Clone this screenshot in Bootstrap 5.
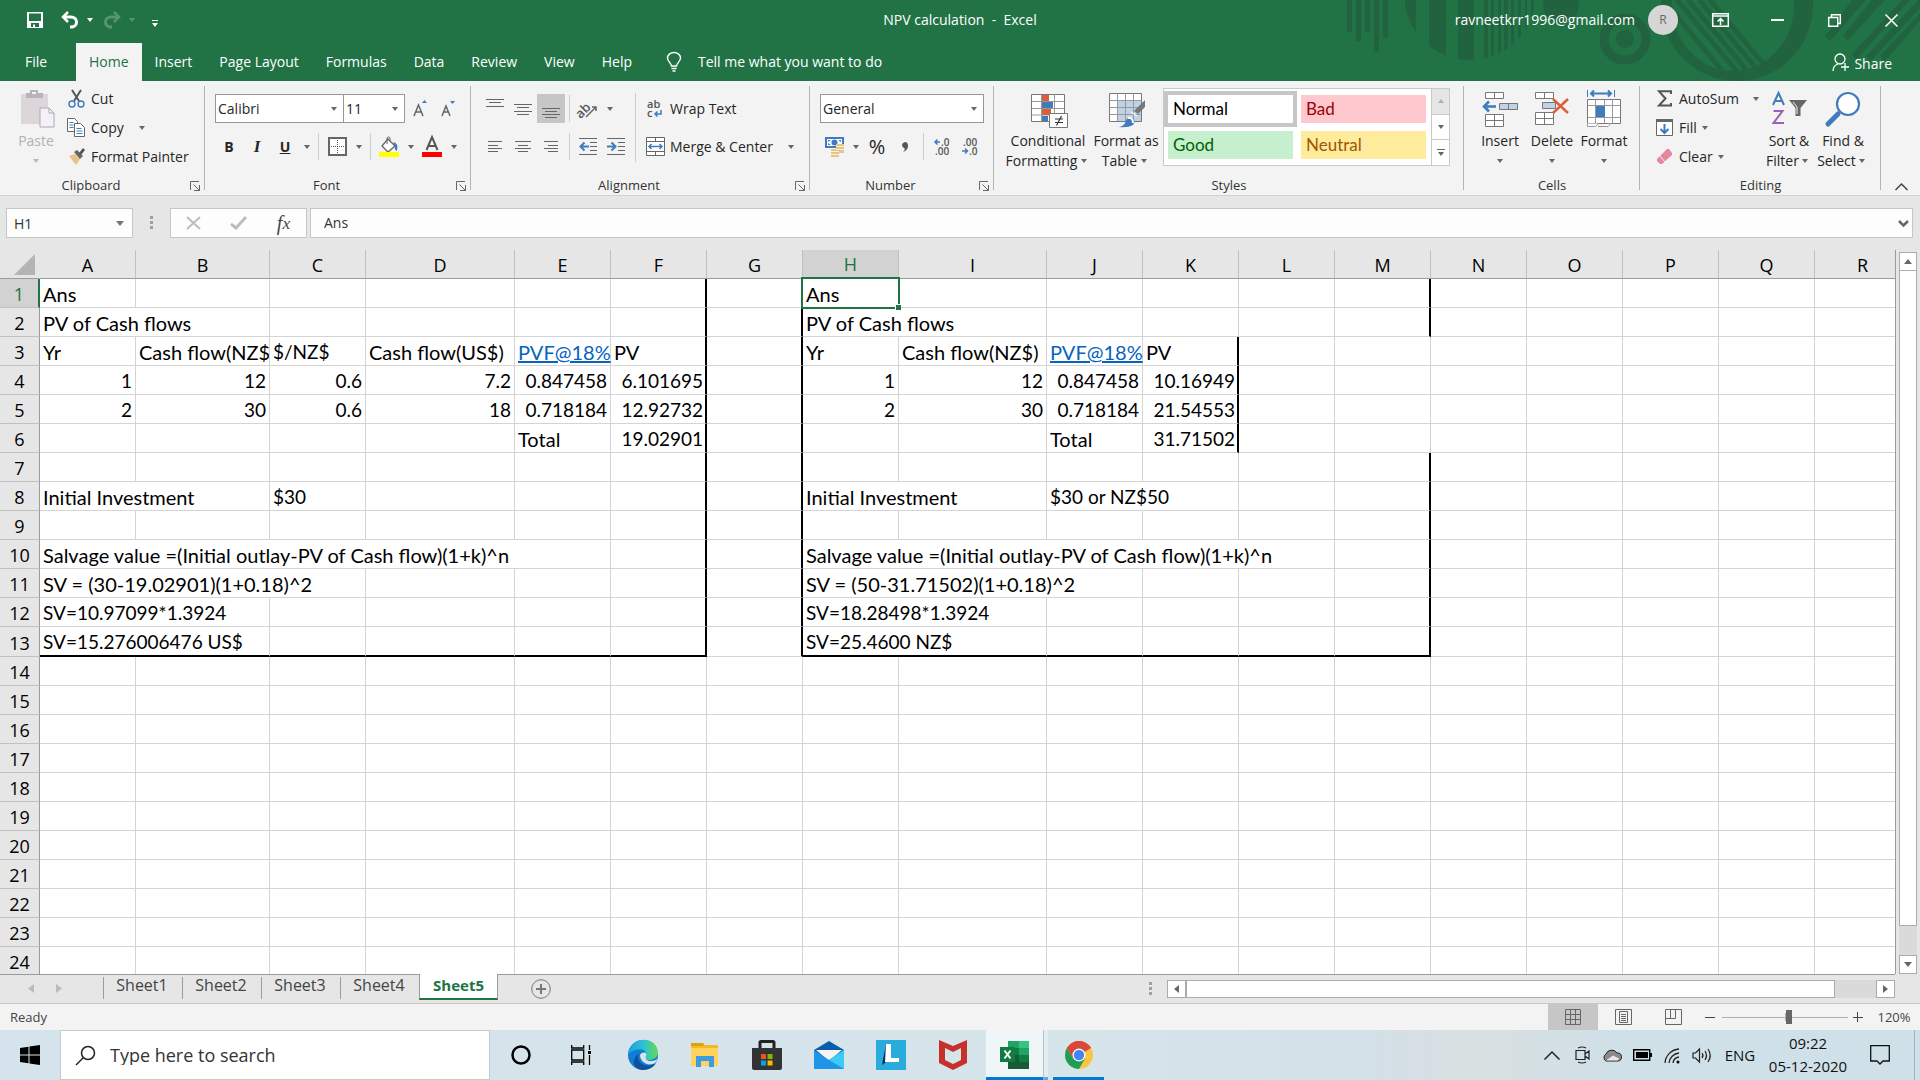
<!DOCTYPE html>
<html lang="en">
<head>
<meta charset="utf-8">
<meta name="viewport" content="width=device-width, initial-scale=1">
<title>NPV calculation - Excel</title>
<link rel="stylesheet" href="https://cdn.jsdelivr.net/npm/bootstrap@5.3.0/dist/css/bootstrap.min.css">
<style>
  body { font-family: "Open Sans", "Noto Sans", sans-serif; font-size: 14px; line-height: 20px; color: #262626; background: #e6e6e6; }
  button { font: inherit; color: inherit; background: none; border: 0; padding: 0; }
  svg { display: block; flex: none; overflow: visible; }
  .app-top { background: #217346; color: #fff; position: relative; }
  .app-top > .deco { position: absolute; right: 0; top: 0; overflow: hidden; }
  .title-row { height: 43px; padding-top: 3px; font-size: 14px; position: relative; }
  .title-row > div { flex: 1 1 0; height: 34px; }
  .quick button { margin-left: 10px; }
  .quick button:first-child { margin-left: 27px; }
  .quick button:nth-of-type(2) { margin-left: 18px; }
  .quick button:last-child { margin-left: 16px; }
  .win-btn { width: 57px; height: 34px; display: flex; align-items: center; justify-content: center; }
  .avatar-dot { width: 30px; height: 30px; margin: 0 14px 0 13px; border-radius: 50%; background: #d6d6d6; color: #666; font-size: 12px; line-height: 30px; text-align: center; }
  .tab-row { height: 38px; position: relative; }
  .tab-row .nav-link { color: #fff; padding: 9px 14px 9px 13px; line-height: 20px; border-radius: 0; }
  .tab-row .nav-link.active { color: #217346; background: #f3f3f3; padding: 9px 13px; }
  .tab-row .file-link { width: 76px; padding-left: 25px; }
  .ribbon { background: #f3f3f3; height: 115px; border-bottom: 1px solid #d2d2d2; padding-top: 3px; }
  .rgroup { display: flex; flex-direction: column; position: relative; height: 111px; flex: none; }
  .rgroup::after { content: ""; position: absolute; right: 0; top: 2px; bottom: 5px; width: 1px; background: #b5b5b5; }
  .rbody { height: 90px; display: flex; padding-left: 10px; }
  .rlabel { text-align: center; font-size: 13px; line-height: 23px; height: 21px; color: #333; position: relative; }
  .rlabel.launch { padding-right: 23px; }
  .rlabel svg { position: absolute; right: 5px; top: 7px; }
  .g-clip { width: 205px; } .g-font { width: 266px; } .g-align { width: 339px; } .g-num { width: 184px; }
  .g-styles { width: 470px; } .g-cells { width: 176px; } .g-edit { width: 241px; }
  .g-styles .rbody { padding-left: 13px; }
  .tool { width: 28px; height: 29px; display: inline-flex; align-items: center; justify-content: center; flex: none; }
  .tool.on { background: #c6c6c6; }
  .tool-text { height: 29px; display: flex; align-items: center; gap: 1px; white-space: nowrap; }
  .serif { font-family: "Liberation Serif", serif; font-size: 17px; }
  .car { width: 15px; display: flex; justify-content: center; align-items: center; flex: none; }
  .car::before { content: ""; border: 3px solid transparent; border-top: 4px solid #666; border-bottom: 0; }
  .car.far { margin-left: 10px; }
  .pale { color: #b1b1b1; }
  .pale .car::before { border-top-color: #b9b9b9; }
  .vsep { width: 1px; margin: 0 4px; height: 27px; background: #cfcfcf; flex: none; }
  .vsep.tall { height: 69px; margin: 9px 5px 0 5px; }
  .trow { display: flex; align-items: center; height: 29px; }
  .two-rows { padding-top: 10px; display: flex; flex-direction: column; gap: 9px; }
  .bigbtn { display: flex; flex-direction: column; align-items: center; padding-top: 4px; line-height: 20px; flex: none; white-space: nowrap; }
  .bigbtn .pic { height: 43px; display: flex; align-items: flex-start; justify-content: center; }
  .bigbtn .car { height: 20px; }
  .bigbtn .line2 { display: flex; }
  .bigbtn .line2 .car { width: 13px; }
  .w82 { width: 82px; } .w74 { width: 74px; } .w54 { width: 54px; } .w52 { width: 52px; } .w112 { width: 112px; }
  .combo { appearance: none; height: 29px; border: 1px solid #979797; border-radius: 0; background: #fff url("data:image/svg+xml,%3Csvg xmlns='http://www.w3.org/2000/svg' width='6' height='4'%3E%3Cpath d='M0 0h6L3 4z' fill='%23666'/%3E%3C/svg%3E") no-repeat right 6px center; padding: 0 2px; font-size: 14px; color: #262626; }
  .combo.face { width: 129px; } .combo.points { width: 62px; margin: 0 2px 0 -1px; } .combo.fmt { width: 164px; }
  .gallery { width: 287px; height: 78px; margin-top: 4px; background: #fff; border: 1px solid #c9c9c9; display: flex; }
  .swatches { display: grid; grid-template-columns: 133px 133px; grid-template-rows: 36px 36px; padding-top: 2px; flex: 1; }
  .swatch { margin: 4px; padding-left: 5px; text-align: left; font-family: Lato, sans-serif; font-size: 17px; line-height: 26px; }
  .swatch.norm { margin: 0; border: 4px solid #c6c6c6; color: #000; }
  .swatch.bad { background: #ffc7ce; color: #9c0006; } .swatch.good { background: #c6efce; color: #006100; } .swatch.neu { background: #ffeb9c; color: #9c5700; }
  .gscroll { width: 18px; border-left: 1px solid #c9c9c9; display: flex; flex-direction: column; }
  .gscroll button { flex: 1; display: flex; align-items: center; justify-content: center; }
  .gscroll button + button { border-top: 1px solid #c9c9c9; }
  .gscroll button:first-child { background: #e6e6e6; }
  .fbar { padding: 12px 7px 12px 6px; height: 54px; display: flex; }
  .fbox { height: 30px; border: 1px solid #c6c6c6; background: #fdfdfd; color: #333; font-size: 14px; border-radius: 0; }
  .fbox.addr { width: 127px; padding: 0 7px; background: #fdfdfd url("data:image/svg+xml,%3Csvg xmlns='http://www.w3.org/2000/svg' width='8' height='5'%3E%3Cpath d='M0 0h8L4 5z' fill='%23777'/%3E%3C/svg%3E") no-repeat right 8px center; }
  .fbox.funcs { width: 137px; } .fbox.funcs button { flex: 1; display: flex; align-items: center; justify-content: center; }
  .fxbtn { font-family: "Liberation Serif", serif; font-style: italic; font-size: 20px; color: #444; }
  .dots3 { width: 37px; display: flex; align-items: center; justify-content: center; }
  .formula { flex: 1; margin-left: 3px; padding-right: 3px; display: flex; align-items: center; }
  .formula input { flex: 1; border: 0; background: transparent; padding: 0 13px; font-size: 14px; color: #333; outline: 0; min-width: 0; }
  .sheet-area { display: flex; flex: 1; min-height: 0; }
  .grid-wrap { flex: 1; min-width: 0; overflow: hidden; border-right: 1px solid #9b9b9b; }
  .cells { table-layout: fixed; width: 0; border-collapse: separate; border-spacing: 0; background: #fff; color: #000; font-family: Lato, sans-serif; font-size: 20px; }
  .cells th { font-family: "Open Sans", sans-serif; font-size: 18px; font-weight: 400; text-align: center; background: #e6e6e6; padding: 2px 0 0; line-height: 26px; overflow: hidden; }
  .cells thead th { height: 29px; border-bottom: 1px solid #9b9b9b; border-right: 1px solid #c0c0c0; }
  .cells thead th:first-child { border-right-color: #e6e6e6; padding: 0; }
  .cells thead th.cur { background: #d2d2d2; color: #217346; border-bottom: 2px solid #217346; line-height: 25px; }
  .cells tbody th { border-right: 1px solid #9b9b9b; border-bottom: 1px solid #c0c0c0; height: 29px; }
  .cells tbody th.cur { background: #d2d2d2; color: #217346; border-right: 2px solid #217346; }
  .cells td { padding: 2px 3px 0 3px; line-height: 26px; height: 29px; border-right: 1px solid #d4d4d4; border-bottom: 1px solid #d4d4d4; white-space: nowrap; position: relative; }
  .cells .closing > * { height: 30px; }
  .cells td.fig { font-size: 19px; }
  .cells td.n { text-align: right; }
  .cells td.clip { overflow: hidden; }
  .cells td.rb { border-right: 2px solid #000; } .cells td.rb.n { padding-right: 2px; } .cells td.bb { border-bottom: 2px solid #000; }
  .cells a { color: #0563c1; }
  .picked { position: absolute; inset: -2px; border: 2px solid #217346; pointer-events: none; z-index: 2; }
  .picked::after { content: ""; position: absolute; right: -3px; bottom: -3px; width: 5px; height: 5px; background: #217346; border: solid #fff; border-width: 1px 0 0 1px; box-sizing: content-box; }
  .corner { margin-left: auto; margin-right: 4px; }
  .vscroll { width: 24px; padding: 2px 3px 0 3px; display: flex; flex-direction: column; }
  .sbtn { width: 18px; height: 19px; background: #fff; border: 1px solid #ababab; display: flex; align-items: center; justify-content: center; flex: none; }
  .strack { background: #dadada; flex: 1; display: flex; }
  .vscroll .strack { flex-direction: column; }
  .sthumb { background: #fff; border: 1px solid #ababab; }
  .vscroll .sthumb { flex: 656; border-top: 0; } .vscroll .srest { flex: 29; }
  .tabbar { height: 30px; border-bottom: 1px solid #c6c6c6; display: flex; align-items: flex-start; padding-right: 25px; background: linear-gradient(#9b9b9b, #9b9b9b) left top / calc(100% - 25px) 1px no-repeat; }
  .tabnavs { width: 103px; height: 29px; display: flex; align-items: center; padding-left: 28px; gap: 22px; }
  .stab { width: 79px; height: 22px; margin-top: 3px; border-left: 1px solid #9b9b9b; text-align: center; font-size: 16px; line-height: 16px; color: #444; display: block; text-decoration: none; padding-right: 2px; }
  .stab.cur { margin-top: 0; height: 26px; background: #fff; border-right: 1px solid #9b9b9b; border-bottom: 2px solid #217346; color: #217346; font-weight: 700; line-height: 22px; font-size: 15px; padding: 0; }
  .addtab { margin: 5px 0 0 33px; }
  .hscroll { margin: 6px 0 0 auto; display: flex; height: 18px; width: 728px; }
  .hscroll .sbtn { height: 18px; width: 19px; }
  .hscroll .sthumb { flex: 649; } .hscroll .srest { flex: 41; }
  .dots-h { margin: 8px 0 0 auto; } .dots-h + .hscroll { margin-left: 15px; }
  .status { height: 26px; background: #f3f3f3; display: flex; align-items: center; padding-left: 10px; font-size: 13px; color: #444; }
  .vbtn { width: 50px; height: 26px; display: flex; align-items: center; justify-content: center; } .vbtn.on { background: #c6c6c6; }
  .zoombar { appearance: none; width: 126px; height: 14px; background: linear-gradient(#b0b0b0, #b0b0b0) center / 100% 1px no-repeat, linear-gradient(#b0b0b0, #b0b0b0) center / 1px 8px no-repeat; margin: 0; }
  .zoombar::-webkit-slider-thumb { appearance: none; width: 6px; height: 14px; background: #666; border: 0; }
  .zbtn { width: 24px; display: flex; justify-content: center; }
  .zbtn.plus { width: 20px; }
  .zpct { width: 52px; }
  .taskbar { height: 50px; display: flex; color: #111; background: linear-gradient(90deg, #d4e3ec 0, #d6e5ea 55%, #d4e2ea 64%, #d3e0e8 71%, #d8dfe0 77%, #d0e0e8 84%, #cfe0e8 100%); }
  .startbtn { width: 60px; display: flex; align-items: center; justify-content: center; }
  .findbox { width: 430px; background: #fff; border: 1px solid #c4cbd0; display: flex; align-items: center; padding-left: 14px; gap: 14px; }
  .findbox input { border: 0; outline: 0; font-size: 18px; flex: 1; min-width: 0; padding: 0; background: transparent; color: #222; }
  .findbox input::placeholder { color: #333; opacity: 1; }
  .tico { width: 62px; display: flex; align-items: center; justify-content: center; }
  .tico.wide { width: 61px; }
  .tico.live { width: 57px; margin-left: 2px; background: #f0f5f7; border-bottom: 3px solid #0078d7; padding-top: 3px; }
  .livemore { width: 5px; background: #e3edf1; border-left: 1px solid #b4c1c7; border-bottom: 3px solid #5ea8e2; }
  .tico.run { width: 51px; margin-left: 5px; border-bottom: 3px solid #0078d7; padding-top: 3px; }
  .tray { margin-left: auto; display: flex; align-items: center; }
  .tray button { width: 30px; display: flex; justify-content: center; }
  .tray .lang { width: 46px; font-size: 15px; }
  .tray .note { width: 20px; }
  .clock { width: 80px; text-align: center; font-size: 15px; line-height: 23px; margin: 0 22px 0 5px; }
  .desk { width: 6px; align-self: stretch; border-left: 1px solid #a5b4bc; margin-left: 24px; }
</style>
</head>
<body class="d-flex flex-column vh-100 overflow-hidden">

<header class="app-top">
  <svg class="deco" width="580" height="81" viewBox="1340 0 580 81" fill="#22633f">
    <defs><clipPath id="bars"><path d="M1405 0h11v81h-11zM1429 0h17v81h-17zM1458 0h16v81h-16zM1484 0h4v81h-4zM1491 0h3v81h-3zM1498 0h3v81h-3zM1504 0h4v81h-4zM1511 0h3v81h-3zM1518 0h3v81h-3zM1525 0h2v81h-2zM1531 0h3v81h-3z"/></clipPath>
    <clipPath id="disc"><circle cx="1735" cy="5" r="66"/></clipPath></defs>
    <path d="M1347 0h5v32h-5zM1356 0h5v41h-5zM1365 0h5v32h-5zM1374 0h5v52h-5zM1383 0h5v38h-5z"/>
    <circle cx="1470" cy="-6" r="66" clip-path="url(#bars)"/>
    <circle cx="1561" cy="5" r="18"/>
    <circle cx="1625" cy="39" r="21" fill="none" stroke="#22633f" stroke-width="9"/><circle cx="1625" cy="39" r="9"/>
    <path fill-rule="evenodd" d="M1813 5a76 76 0 1 1-152 0a76 76 0 1 1 152 0M1794 5a61 66 0 1 0-122 0a61 66 0 1 0 122 0"/>
    <g stroke="#22633f" stroke-width="5" clip-path="url(#disc)"><path d="M1663 0l72 86M1677 0l72 86M1688 0l72 86M1699 0l72 86M1710 0l72 86"/></g>
    <path d="M1825 36l27-36h14l-36 41zM1843 35l29-35h13l-38 41zM1852 54l50-54h8l-54 60zM1866 56l54-58v10l-50 54zM1880 56l40-43v8l-36 41z"/>
  </svg>
  <div class="title-row d-flex align-items-start">
    <div class="quick d-flex align-items-center">
      <button aria-label="Save"><svg width="16" height="16" viewBox="0 0 16 16"><path d="M0 0h16v16H0zM2 1.500V9h12V1.500zM4 11v4h2v-2.500h2V15h4v-4z" fill="#fff" fill-rule="evenodd"/></svg></button>
      <button aria-label="Undo"><svg width="18" height="16" viewBox="0 0 18 16" fill="none" stroke="#fff" stroke-width="3"><path d="M3 5h7a5 4.500 0 0 1 0 10H9"/><path d="M7 0L2 5l5 5" stroke-width="2.500"/></svg></button>
      <span class="ms-2"><svg width="6" height="4"><path d="M0 0h6L3 4z" fill="#fff"/></svg></span>
      <button aria-label="Redo"><svg width="18" height="16" viewBox="0 0 18 16" fill="none" stroke="#569473" stroke-width="3"><path d="M15 5H8a5 4.500 0 0 0 0 10h1"/><path d="M11 0l5 5-5 5" stroke-width="2.500"/></svg></button>
      <span class="ms-2"><svg width="6" height="4"><path d="M0 0h6L3 4z" fill="#569473"/></svg></span>
      <button aria-label="Customize Quick Access Toolbar" class="pt-2"><svg width="8" height="8"><path d="M1 0h6v1H1zM1 3h6L4 7z" fill="#fff"/></svg></button>
    </div>
    <div class="d-flex align-items-center justify-content-center">NPV calculation&nbsp; -&nbsp; Excel</div>
    <div class="d-flex align-items-center justify-content-end">
      <span>ravneetkrr1996@gmail.com</span>
      <span class="avatar-dot">R</span>
      <button class="win-btn" aria-label="Ribbon Display Options"><svg width="17" height="14" viewBox="0 0 17 14" fill="none" stroke="#fff" stroke-width="1.500"><path d="M.7.7h15.600v12.600H.7zM1 3h15M8.500 12V6M5.500 8.500l3-3 3 3"/></svg></button>
      <button class="win-btn" aria-label="Minimize"><svg width="13" height="2"><path d="M0 0h13v2H0z" fill="#fff"/></svg></button>
      <button class="win-btn" aria-label="Restore"><svg width="13" height="13" viewBox="0 0 13 13" fill="none" stroke="#fff" stroke-width="1.500"><path d="M.7 3.500h9v8.800h-9zM3.500 3.500V.7h8.800v8.800H10"/></svg></button>
      <button class="win-btn" aria-label="Close"><svg width="13" height="13" viewBox="0 0 13 13" stroke="#fff" stroke-width="1.500"><path d="M.5.5l12 12M12.500.5l-12 12"/></svg></button>
    </div>
  </div>
  <nav class="tab-row d-flex">
    <div class="nav flex-nowrap">
      <a class="nav-link file-link" href="#">File</a><a class="nav-link active" href="#">Home</a><a class="nav-link" href="#">Insert</a><a class="nav-link" href="#">Page Layout</a><a class="nav-link" href="#">Formulas</a><a class="nav-link" href="#">Data</a><a class="nav-link" href="#">Review</a><a class="nav-link" href="#">View</a><a class="nav-link" href="#">Help</a>
    </div>
    <button class="d-flex align-items-center ms-3 ps-1"><svg width="16" height="20" viewBox="0 0 16 20" fill="none" stroke="#fff" stroke-width="1.400"><path d="M5.500 14c0-3-4-4-4-8a6.500 5.500 0 0 1 13 0c0 4-4 5-4 8zM5.500 16.500h5M6.500 19h3"/></svg><span class="ms-3">Tell me what you want to do</span></button>
    <button class="d-flex align-items-center ms-auto pe-4 me-1"><svg width="18" height="19" viewBox="0 0 18 19" fill="none" stroke="#fff" stroke-width="1.300"><circle cx="8" cy="6" r="5"/><path d="M1 18c0-4 2-6 5-7M13 10v8M9 14h8"/></svg><span class="ms-1 pt-1">Share</span></button>
  </nav>
</header>

<section class="ribbon d-flex" aria-label="Home ribbon">
  <div class="rgroup g-clip">
    <div class="rbody">
      <button class="bigbtn w52 pale"><span class="pic"><svg width="36" height="40" viewBox="0 0 36 40"><path d="M3 6h27v30H3z" fill="#dcd6da"/><path d="M8 5h4V2h8v3h5v5H8z" fill="#b5b5b5"/><path d="M14 4h4v2h-4z" fill="#f3f3f3"/><path d="M22 20h9l5 5v14H22z" fill="#f5f0f7" stroke="#aaa"/><path d="M31 20v5h5" fill="none" stroke="#aaa"/></svg></span>Paste<span class="car"></span></button>
      <div>
        <button class="tool-text"><span class="tool"><svg width="17" height="19" viewBox="0 0 17 19" fill="none"><path d="M4 1l7 11M13 1L6 12" stroke="#555" stroke-width="2"/><circle cx="4" cy="15" r="3" stroke="#3f7bbd" stroke-width="1.400"/><circle cx="13" cy="15" r="3" stroke="#3f7bbd" stroke-width="1.400"/></svg></span>Cut</button>
        <button class="tool-text"><span class="tool"><svg width="18" height="19" viewBox="0 0 18 19" fill="#fff" stroke="#666"><path d="M.5.5h7l3 3v10H.5z"/><path d="M7.500 5.500h6l4 4v9h-10z"/><path d="M2.500 4.500h4M2.500 7h4M2.500 9.500h4M9.500 10.500h5M9.500 13h6M9.500 15.500h6" stroke="#3f7bbd"/></svg></span>Copy<span class="car far"></span></button>
        <button class="tool-text"><span class="tool"><svg width="17" height="18" viewBox="0 0 17 18"><path d="M1 8l6-2 5 5-4 6z" fill="#eac282"/><path d="M6 4l3-2 6 6-3 3z" fill="#666"/><path d="M11 5l4-5 2 2-4 5z" fill="#555"/></svg></span>Format Painter</button>
      </div>
    </div>
    <div class="rlabel launch">Clipboard<svg width="10" height="10" fill="none" stroke="#666"><path d="M.5 9V.5H9M3.500 3.500l6 6M9.500 4v5.500H4"/></svg></div>
  </div>

  <div class="rgroup g-font">
    <div class="rbody"><div class="two-rows">
      <div class="trow"><select class="combo face" aria-label="Font"><option>Calibri</option></select><select class="combo points" aria-label="Font Size"><option>11</option></select>
        <button class="tool" aria-label="Increase Font Size"><svg width="16" height="17" viewBox="0 0 16 17"><path d="M1 16L5.500 5L10 16M3 12h5" fill="none" stroke="#666" stroke-width="1.500"/><path d="M9 3h5l-2.500-3z" fill="#3f7bbd"/></svg></button>
        <button class="tool" aria-label="Decrease Font Size"><svg width="16" height="17" viewBox="0 0 16 17"><path d="M1 16L5 6L9 16M3 12h5" fill="none" stroke="#666" stroke-width="1.500"/><path d="M9 1h5l-2.500 3z" fill="#3f7bbd"/></svg></button></div>
      <div class="trow"><button class="tool fw-bold">B</button><button class="tool fst-italic fw-bold serif">I</button><button class="tool fw-bold text-decoration-underline">U</button><span class="car"></span><span class="vsep"></span>
        <button class="tool" aria-label="Borders"><svg width="19" height="19" viewBox="0 0 19 19" fill="#fff"><path d="M1 1h17v17H1z" stroke="#666" stroke-width="2"/><path d="M9.500 3v13M3 9.500h13" stroke="#555" stroke-dasharray="1 1"/></svg></button><span class="car"></span><span class="vsep"></span>
        <button class="tool" aria-label="Fill Color"><svg width="20" height="20" viewBox="0 0 20 20"><path d="M9 2l7 7-7 6-6-6z" fill="#fff" stroke="#666" stroke-width="1.300"/><path d="M8 7V1.500a1.500 1.500 0 0 1 3 0V4" fill="none" stroke="#666"/><path d="M14 5q6 1 4 9q-3-1-2-5z" fill="#3f7bbd"/><path d="M0 15h20v5H0z" fill="#ff0"/></svg></button><span class="car"></span>
        <button class="tool" aria-label="Font Color"><svg width="20" height="20" viewBox="0 0 20 20"><path d="M4.500 13L10 0l5.500 13M6.500 9h7" fill="none" stroke="#555" stroke-width="2"/><path d="M0 15h20v5H0z" fill="red"/></svg></button><span class="car"></span></div>
    </div></div>
    <div class="rlabel launch">Font<svg width="10" height="10" fill="none" stroke="#666"><path d="M.5 9V.5H9M3.500 3.500l6 6M9.500 4v5.500H4"/></svg></div>
  </div>

  <div class="rgroup g-align">
    <div class="rbody">
      <div class="two-rows">
        <div class="trow"><button class="tool" aria-label="Top Align"><svg width="18" height="20" stroke="#666"><path d="M0 .5h18M3 3.500h12M0 7.500h18"/></svg></button><button class="tool" aria-label="Middle Align"><svg width="18" height="14" stroke="#666"><path d="M0 2.500h18M3 5.500h12M0 9.500h18M3 12.500h12"/></svg></button><button class="tool on" aria-label="Bottom Align"><svg width="18" height="20" stroke="#666"><path d="M0 9.500h18M3 12.500h12M0 15.500h18M3 18.500h12"/></svg></button><span class="vsep"></span>
          <button class="tool" aria-label="Orientation"><svg width="20" height="19" viewBox="0 0 20 19"><text x="-3" y="15" transform="rotate(-45 6 11)" font-size="13" fill="#555" font-weight="600">ab</text><path d="M8 18L18 8M14 8h4v4" fill="none" stroke="#666" stroke-width="1.500"/></svg></button><span class="car"></span></div>
        <div class="trow"><button class="tool" aria-label="Align Left"><svg width="14" height="12" stroke="#666"><path d="M0 .5h14M0 4.500h10M0 7.500h14M0 10.500h10"/></svg></button><button class="tool" aria-label="Center"><svg width="16" height="12" stroke="#666"><path d="M0 .5h16M3 4.500h10M0 7.500h16M3 10.500h10"/></svg></button><button class="tool" aria-label="Align Right"><svg width="14" height="12" stroke="#666"><path d="M0 .5h14M4 4.500h10M0 7.500h14M4 10.500h10"/></svg></button><span class="vsep"></span>
          <button class="tool" aria-label="Decrease Indent"><svg width="18" height="17" stroke="#666"><path d="M0 .5h18M11 4.500h7M11 8.500h7M11 12.500h7M0 16.500h18"/><path d="M10 8.500H2M5.500 4.500l-4 4 4 4" fill="none" stroke="#3f7bbd" stroke-width="2"/></svg></button><button class="tool" aria-label="Increase Indent"><svg width="18" height="17" stroke="#666"><path d="M0 .5h18M11 4.500h7M11 8.500h7M11 12.500h7M0 16.500h18"/><path d="M0 8.500h8M4.500 4.500l4 4-4 4" fill="none" stroke="#3f7bbd" stroke-width="2"/></svg></button></div>
      </div>
      <span class="vsep tall"></span>
      <div class="two-rows">
        <button class="tool-text"><span class="tool"><svg width="16" height="18" viewBox="0 0 16 18"><text x="0" y="8" font-size="11" font-weight="600" fill="#555">ab</text><text x="0" y="17" font-size="11" font-weight="600" fill="#555">c</text><path d="M14 10v4H8M10.500 11.500L8 14l2.500 2.500" fill="none" stroke="#3f7bbd" stroke-width="1.500"/></svg></span>Wrap Text</button>
        <button class="tool-text"><span class="tool"><svg width="19" height="19" viewBox="0 0 19 19" fill="#fff" stroke="#666"><path d="M.5.5h18v18H.5z"/><path d="M.5 4.500h18M.5 14.500h18M9.500 .5v4M9.500 14.500v4"/><path d="M3 9.500h13M5.500 7L3 9.500 5.500 12M13.500 7l2.500 2.500-2.500 2.500" fill="none" stroke="#3f7bbd" stroke-width="1.500"/></svg></span>Merge &amp; Center<span class="car far"></span></button>
      </div>
    </div>
    <div class="rlabel launch">Alignment<svg width="10" height="10" fill="none" stroke="#666"><path d="M.5 9V.5H9M3.500 3.500l6 6M9.500 4v5.500H4"/></svg></div>
  </div>

  <div class="rgroup g-num">
    <div class="rbody"><div class="two-rows">
      <select class="combo fmt" aria-label="Number Format"><option>General</option></select>
      <div class="trow"><button class="tool" aria-label="Accounting Number Format"><svg width="19" height="20" viewBox="0 0 19 20"><path d="M0 0h19v11H0z" fill="#3f7bbd"/><path d="M2 2h15v7H2z" fill="#fff"/><path d="M3 3h3l-3 2zM16 3v2l-3-2zM3 8V6l3 2z" fill="#3f7bbd"/><circle cx="9.500" cy="5.500" r="3" fill="#3f7bbd"/><path d="M11 7h8v9h-5v4H6v-8h5z" fill="#eac282"/><path d="M11 9.500h8M11 12.500h8M6 14.500h8M6 17.500h8" stroke="#f3f3f3"/></svg></button><span class="car"></span><button class="tool fs-5">%</button><button class="tool" aria-label="Comma Style"><svg width="6" height="10"><path d="M3 0q3 0 3 4q0 4-5 6q3-3 1-4q-2-1-2-3T3 0z" fill="#555"/></svg></button><span class="vsep"></span>
        <button class="tool" aria-label="Increase Decimal"><svg width="16" height="18" viewBox="0 0 16 18"><text x="7" y="8" font-size="10" font-weight="600" fill="#555">.0</text><text x="1" y="17" font-size="10" font-weight="600" fill="#555">.00</text><path d="M6 4H1M3.500 1.500L1 4l2.500 2.500" fill="none" stroke="#3f7bbd" stroke-width="1.500"/></svg></button>
        <button class="tool" aria-label="Decrease Decimal"><svg width="16" height="18" viewBox="0 0 16 18"><text x="1" y="8" font-size="10" font-weight="600" fill="#555">.00</text><text x="7" y="17" font-size="10" font-weight="600" fill="#555">.0</text><path d="M0 13h5M3 10.500L5.500 13 3 15.500" fill="none" stroke="#3f7bbd" stroke-width="1.500"/></svg></button></div>
    </div></div>
    <div class="rlabel launch">Number<svg width="10" height="10" fill="none" stroke="#666"><path d="M.5 9V.5H9M3.500 3.500l6 6M9.500 4v5.500H4"/></svg></div>
  </div>

  <div class="rgroup g-styles">
    <div class="rbody">
      <button class="bigbtn w82"><span class="pic pt-1 ps-1"><svg width="38" height="36" viewBox="0 0 38 36"><path d="M.5 2.500h33v27H.5z" fill="#fff" stroke="#777"/><path d="M.5 9.500h33M.5 16.500h33M.5 23h33M10.500 2.500v27M23.500 2.500v27" stroke="#999"/><path d="M11 3h7v6h-7zM11 17h9v6h-9z" fill="#d9603b"/><path d="M11 10h11v6H11zM11 24h6v5h-6z" fill="#3f7bbd"/><path d="M18.500 21.500h18v14h-18z" fill="#fff" stroke="#777"/><path d="M24 27h8M24 30.500h8M30.500 24l-5 9.500" stroke="#333" stroke-width="1.200"/></svg></span>Conditional<span class="line2">Formatting<span class="car"></span></span></button>
      <button class="bigbtn w74"><span class="pic pt-1 ps-1"><svg width="38" height="36" viewBox="0 0 38 36"><path d="M.5 1.500h32v28H.5z" fill="#fff" stroke="#777"/><path d="M9 9h23v20H9z" fill="#bfd2e6"/><path d="M.5 8.500h32M.5 15.500h32M.5 22.500h32M8.500 1.500v28M16.500 1.500v28M24.500 1.500v28" stroke="#999"/><path d="M36 8v7l-7 7-4-3z" fill="#777"/><path d="M28 24l-6-4" stroke="#f3f3f3" stroke-width="1.500"/><path d="M10 35q6-1 7-7q3-4 7-2q3 3 0 7q-5 3-14 2z" fill="#3f7bbd"/><path d="M19 26q5-1 5 5" fill="none" stroke="#fff" stroke-width="2"/></svg></span>Format as<span class="line2">Table<span class="car"></span></span></button>
      <div class="gallery"><div class="swatches"><button class="swatch norm">Normal</button><button class="swatch bad">Bad</button><button class="swatch good">Good</button><button class="swatch neu">Neutral</button></div>
        <div class="gscroll"><button aria-label="Previous styles"><svg width="6" height="4"><path d="M0 4h6L3 0z" fill="#b0b0b0"/></svg></button><button aria-label="Next styles"><svg width="6" height="4"><path d="M0 0h6L3 4z" fill="#666"/></svg></button><button aria-label="More styles"><svg width="8" height="7"><path d="M0 0h8v1H0zM1 3h6L4 7z" fill="#666"/></svg></button></div></div>
    </div>
    <div class="rlabel">Styles</div>
  </div>

  <div class="rgroup g-cells">
    <div class="rbody">
      <button class="bigbtn w52"><span class="pic pt-1"><svg width="37" height="36" viewBox="0 0 37 36" fill="#fff" stroke="#777"><path d="M3.500.5h18v6h-18zM12.500.5v6"/><path d="M17.500 11.500h18v6h-18z" fill="#bfd2e6"/><path d="M26.500 11.500v6"/><path d="M3.500 22.500h18v12h-18zM12.500 22.500v12M3.500 28.500h18"/><path d="M14 14.500H2M7 9.500l-5 5 5 5" fill="none" stroke="#3f7bbd" stroke-width="2.500"/></svg></span>Insert<span class="car"></span></button>
      <button class="bigbtn w52"><span class="pic pt-1"><svg width="36" height="36" viewBox="0 0 36 36" fill="#fff" stroke="#777"><path d="M1.500.5h18v6h-18zM10.500.5v6"/><path d="M8.500 10.500h13v6h-13z" fill="#bfd2e6"/><path d="M1.500 20.500h18v12h-18zM10.500 20.500v12M1.500 26.500h18"/><path d="M19 7l15 14M34 7L19 21" fill="none" stroke="#d9603b" stroke-width="2.500"/></svg></span>Delete<span class="car"></span></button>
      <button class="bigbtn w52"><span class="pic"><svg width="36" height="40" viewBox="0 0 36 40" fill="#fff" stroke="#777"><path d="M1.500 11.500h33v24h-33z"/><path d="M1.500 17.500h33M1.500 29.500h33M9.500 11.500v24M26.500 11.500v24M18.500 11.500v24M1.500 35.500v3h8l3-3M12 38.500h10l3-3" stroke="#999"/><path d="M10 18h9v11h-9z" fill="#3f7bbd" stroke="none"/><path d="M1.500 2v7M28.500 2v7" stroke="#3f7bbd"/><path d="M5 5.500h20M8 2.500l-3 3 3 3M22 2.500l3 3-3 3" fill="none" stroke="#3f7bbd" stroke-width="2"/></svg></span>Format<span class="car"></span></button>
    </div>
    <div class="rlabel">Cells</div>
  </div>

  <div class="rgroup g-edit">
    <div class="rbody">
      <div class="w112">
        <button class="tool-text"><span class="tool"><svg width="15" height="17" viewBox="0 0 15 17" fill="none" stroke="#555" stroke-width="2"><path d="M14 4V1.200H2L8.500 8.500 2 15.500h12V13"/></svg></span>AutoSum<span class="car ms-2"></span></button>
        <button class="tool-text"><span class="tool"><svg width="17" height="17" viewBox="0 0 17 17"><path d="M.5.5h16v16H.5z" fill="#fff" stroke="#666"/><path d="M0 0h17v3H0z" fill="#666"/><path d="M8.500 5v9M4.500 10l4 4 4-4" fill="none" stroke="#3f7bbd" stroke-width="2"/></svg></span>Fill<span class="car"></span></button>
        <button class="tool-text"><span class="tool"><svg width="17" height="17" viewBox="0 0 17 17"><path d="M1 11L11 1h2l3 4v2L6 16H4l-3-3z" fill="#e8879b"/><path d="M4 8l5 6" stroke="#f3f3f3"/></svg></span>Clear<span class="car"></span></button>
      </div>
      <button class="bigbtn w54"><span class="pic pt-1"><svg width="35" height="34" viewBox="0 0 35 34" fill="none"><path d="M1 13L6.500 1 12 13M3 9h7" stroke="#3f7bbd" stroke-width="2"/><path d="M1.500 19h9L1.500 31H12" stroke="#9b5fb5" stroke-width="2"/><path d="M17 8h18l-6.500 8v8h-5v-8z" fill="#666"/><path d="M21 10l4 5v7" stroke="#f3f3f3"/></svg></span>Sort &amp;<span class="line2">Filter<span class="car"></span></span></button>
      <button class="bigbtn w54"><span class="pic pt-1"><svg width="35" height="35" viewBox="0 0 35 35"><path d="M12 22L2 32" stroke="#3f7bbd" stroke-width="5" stroke-linecap="round"/><circle cx="22" cy="12" r="11" fill="#fff" stroke="#3f7bbd" stroke-width="2.200"/></svg></span>Find &amp;<span class="line2">Select<span class="car"></span></span></button>
    </div>
    <div class="rlabel">Editing</div>
  </div>
  <button class="ms-auto me-2 align-self-end pb-1 pe-1" aria-label="Collapse the Ribbon"><svg width="13" height="8" fill="none" stroke="#444" stroke-width="1.500"><path d="M.5 7L6.500 1l6 6"/></svg></button>
</section>

<div class="fbar">
  <input class="fbox addr" value="H1" aria-label="Name Box">
  <div class="dots3"><svg width="3" height="14" fill="#a0a0a0"><path d="M0 0h3v3H0zM0 5h3v3H0zM0 10h3v3H0z"/></svg></div>
  <div class="fbox funcs d-flex">
    <button aria-label="Cancel"><svg width="15" height="14" stroke="#bdbdbd" stroke-width="2"><path d="M1 1l13 12M14 1L1 13"/></svg></button>
    <button aria-label="Enter"><svg width="17" height="14" fill="none" stroke="#bdbdbd" stroke-width="3"><path d="M1 8l5 4L16 1"/></svg></button>
    <button class="fxbtn">f<small>x</small></button>
  </div>
  <div class="fbox formula"><input value="Ans" aria-label="Formula Bar"><svg width="11" height="7" fill="none" stroke="#666" stroke-width="2.500"><path d="M1 1l4.500 4.500L10 1"/></svg></div>
</div>

<main class="sheet-area">
  <div class="grid-wrap"><table class="cells"><colgroup id="cols"></colgroup><thead id="head"></thead><tbody id="rows"></tbody></table></div>
  <div class="vscroll"><button class="sbtn" aria-label="Scroll up"><svg width="8" height="5"><path d="M0 5h8L4 0z" fill="#666"/></svg></button><div class="strack"><div class="sthumb"></div><div class="srest"></div></div><button class="sbtn" aria-label="Scroll down"><svg width="8" height="5"><path d="M0 0h8L4 5z" fill="#666"/></svg></button></div>
</main>

<div class="tabbar">
  <div class="tabnavs"><button aria-label="Previous sheets"><svg width="6" height="9"><path d="M6 0v9L0 4.500z" fill="#bbb"/></svg></button><button aria-label="Next sheets"><svg width="6" height="9"><path d="M0 0v9l6-4.500z" fill="#bbb"/></svg></button></div>
  <a class="stab" href="#">Sheet1</a><a class="stab" href="#">Sheet2</a><a class="stab" href="#">Sheet3</a><a class="stab" href="#">Sheet4</a><a class="stab cur" href="#">Sheet5</a>
  <button class="addtab" aria-label="New sheet"><svg width="20" height="20" fill="none" stroke="#777"><circle cx="10" cy="10" r="9.300"/><path d="M10 5v10M5 10h10" stroke-width="2"/></svg></button>
  <svg class="dots-h" width="3" height="14" fill="#a0a0a0"><path d="M0 0h3v3H0zM0 5h3v3H0zM0 10h3v3H0z"/></svg>
  <div class="hscroll"><button class="sbtn" aria-label="Scroll left"><svg width="5" height="8"><path d="M5 0v8L0 4z" fill="#666"/></svg></button><div class="strack"><div class="sthumb"></div><div class="srest"></div></div><button class="sbtn" aria-label="Scroll right"><svg width="5" height="8"><path d="M0 0v8l5-4z" fill="#666"/></svg></button></div>
</div>

<footer class="status">
  <span>Ready</span>
  <button class="vbtn on ms-auto" aria-label="Normal view"><svg width="16" height="16" fill="none" stroke="#666"><path d="M.5.5h15v15H.5zM.5 5.500h15M.5 10.500h15M5.500.5v15M10.500.5v15"/></svg></button>
  <button class="vbtn" aria-label="Page Layout view"><svg width="17" height="16" fill="none" stroke="#666"><path d="M.5.5h16v15H.5zM4.500 2.500h8v11h-8zM6 5.500h5M6 7.500h5M6 9.500h5M6 11.500h5"/></svg></button>
  <button class="vbtn" aria-label="Page Break Preview"><svg width="17" height="16" fill="none" stroke="#666"><path d="M.5.5h16v15H.5zM.5 9.500h10v-9M5.500.5v9"/></svg></button>
  <button class="zbtn" aria-label="Zoom out"><svg width="10" height="1"><path d="M0 0h10v1H0z" fill="#444"/></svg></button>
  <input class="zoombar" type="range" min="0" max="100" value="53" aria-label="Zoom">
  <button class="zbtn plus" aria-label="Zoom in"><svg width="10" height="10" stroke="#444"><path d="M0 5.500h10M4.500 0v10"/></svg></button>
  <button class="zpct">120%</button>
</footer>

<div class="taskbar">
  <button class="startbtn" aria-label="Start"><svg width="20" height="20" viewBox="0 0 20 20"><path d="M0 3l8.500-1.200V9.500H0zM9.500 1.600L20 0v9.500H9.500zM0 10.500h8.500v7.700L0 17zM9.500 10.500H20V20L9.500 18.400z"/></svg></button>
  <label class="findbox"><svg width="21" height="21" fill="none" stroke="#222" stroke-width="1.500"><circle cx="13" cy="8" r="6.500"/><path d="M8.500 12.500L1 20"/></svg><input type="search" placeholder="Type here to search" aria-label="Type here to search"></label>
  <button class="tico wide" aria-label="Cortana"><svg width="20" height="20" fill="none" stroke="#000" stroke-width="2.500"><circle cx="10" cy="10" r="8.500"/></svg></button>
  <button class="tico wide" aria-label="Task View"><svg width="21" height="20" fill="none" stroke="#000" stroke-width="1.300"><path d="M.7 5h12v10H.7zM.7 0v3h12V0M.7 20v-3h12v3M18.500 0v5M18.500 10v10"/><path d="M17 6h3v3h-3z" fill="#000" stroke="none"/></svg></button>
  <button class="tico" aria-label="Edge"><svg width="30" height="30" viewBox="0 0 30 30"><defs><linearGradient id="eg" x1="0" x2="1"><stop offset="0" stop-color="#1d9de0"/><stop offset=".55" stop-color="#2fc3d0"/><stop offset="1" stop-color="#67d94c"/></linearGradient></defs><circle cx="15" cy="15" r="15" fill="#0f7fd3"/><path d="M0 14C2-4 28-5 30 12c0 6-5 8-9 8c-3 0-4-2-3-4c2-5-5-11-18-2z" fill="url(#eg)"/><path d="M10 16c0 8 9 13 18 7c-4 7-12 8-18 6C4 26 4 17 12 13c-1 1-2 2-2 3z" fill="#11509c"/><path d="M12 15c2-4 8-3 6 1c-1 3 1 5 5 5c3 0 5-1 6-2c0 2-1 3-2 4c-7 4-15-1-15-8z" fill="#d6e5ea"/></svg></button>
  <button class="tico" aria-label="File Explorer"><svg width="28" height="24" viewBox="0 0 28 24"><path d="M0 0h12l2 3H0z" fill="#e0a010"/><path d="M0 3h27v20H0z" fill="#ffd35c"/><path d="M0 3h12l2-1h13v3H0z" fill="#f5b921"/><path d="M5 13h18v11h-5v-6h-8v6H5z" fill="#3d9be0"/></svg></button>
  <button class="tico" aria-label="Microsoft Store"><svg width="30" height="30" viewBox="0 0 30 30"><path d="M8 9V2.500q0-1 1-1h12q1 0 1 1V9" fill="none" stroke="#222" stroke-width="3"/><path d="M0 8h30v20q0 2-2 2H2q-2 0-2-2z" fill="#333"/><path d="M9 14h5v5H9z" fill="#f25022"/><path d="M15.500 14h5v5h-5z" fill="#7fba00"/><path d="M9 20.500h5v5H9z" fill="#00a4ef"/><path d="M15.500 20.500h5v5h-5z" fill="#ffb900"/></svg></button>
  <button class="tico" aria-label="Mail"><svg width="30" height="28" viewBox="0 0 30 28"><path d="M0 9L15 0l15 9v8H0z" fill="#0a5cad"/><path d="M2 9h26L15 20z" fill="#f4f4f4"/><path d="M0 9l15 10L30 9v19H0z" fill="#1e95e6"/><path d="M30 9L15 19l15 9z" fill="#3bcbf4"/></svg></button>
  <button class="tico" aria-label="L"><svg width="30" height="30"><path d="M0 0h30v30H0z" fill="#29abdb"/><path d="M6 25L10 4h3v16z" fill="#0b2b66"/><path d="M10 4h5v14h8v4H9z" fill="#fff"/></svg></button>
  <button class="tico" aria-label="McAfee"><svg width="28" height="30" viewBox="0 0 28 30"><path d="M0 0l14 6L28 0v23l-14 7-14-7zM6 8v12l8 4 8-4V8l-8 4z" fill="#c8302c" fill-rule="evenodd"/></svg></button>
  <button class="tico live" aria-label="Excel"><svg width="30" height="28" viewBox="0 0 30 28"><path d="M8 0h21v28H8z" fill="#21a366"/><path d="M19 0h10v7H19z" fill="#33c481"/><path d="M8 7h11v7H8zM19 14h10v7H19z" fill="#107c41"/><path d="M8 14h11v7H8zM8 21h21v7H8z" fill="#185c37"/><path d="M0 6h15v15H0z" fill="#107c41"/><path d="M4.500 9.500l6 8M10.500 9.500l-6 8" stroke="#fff" stroke-width="2"/></svg></button><span class="livemore"></span>
  <button class="tico run" aria-label="Chrome"><svg width="28" height="28" viewBox="0 0 28 28"><circle cx="14" cy="14" r="14" fill="#fbc540"/><path d="M14 14L1.900 7A14 14 0 0 1 26.100 7z" fill="#d9483b"/><path d="M14 7h12.100A14 14 0 0 0 1.900 7L8 17.500z" fill="#d9483b"/><path d="M1.900 7A14 14 0 0 0 14 28l6-10.500-12 0z" fill="#1f9d58"/><circle cx="14" cy="14" r="6.500" fill="#fff"/><circle cx="14" cy="14" r="5.200" fill="#4285f4"/></svg></button>
  <div class="tray">
    <button aria-label="Show hidden icons"><svg width="16" height="9" fill="none" stroke="#222" stroke-width="1.500"><path d="M.5 8.500L8 1l7.500 7.500"/></svg></button>
    <button aria-label="Meet Now"><svg width="15" height="18" fill="none" stroke="#222" stroke-width="1.200"><path d="M1 4.500h9v9H1zM10 8l4-3v8l-4-3M3 2q4-2 8 0M3 16q4 2 8 0"/></svg></button>
    <button aria-label="OneDrive"><svg width="20" height="14" viewBox="0 0 20 14"><path d="M4 13a4 4 0 0 1 0-7a6 5.500 0 0 1 11-1a4 4 0 0 1 1 8z" fill="#8b8b8b" stroke="#222"/><path d="M4 12.500l7-5 6 3-1 2z" fill="#e8e8e8"/></svg></button>
    <button aria-label="Battery"><svg width="19" height="12"><path d="M.7.7h16v10.600H.7z" fill="none" stroke="#000" stroke-width="1.400"/><path d="M3 3h12v6H3zM17 4h2v4h-2z"/></svg></button>
    <button aria-label="Wi-Fi"><svg width="17" height="17" fill="none" stroke="#222" stroke-width="1.300"><path d="M1 16A15 15 0 0 1 15 2M5 16A11 11 0 0 1 15 6M9 16a7 7 0 0 1 6-6"/><circle cx="14" cy="15" r="1.500" fill="#000" stroke="none"/></svg></button>
    <button aria-label="Volume"><svg width="20" height="17" fill="none" stroke="#222" stroke-width="1.200"><path d="M1 6h2.500l4-4v13l-4-4H1zM10 6q2 2.500 0 5M13 4q3 4.500 0 9M16 2q4.500 6.500 0 13"/></svg></button>
    <button class="lang">ENG</button>
    <div class="clock">09:22<br>05-12-2020</div>
    <button class="note" aria-label="Notifications"><svg width="20" height="20" fill="none" stroke="#111" stroke-width="1.300"><path d="M.7.7h18.600V16H13l-3 3-3-3H.7z"/></svg></button>
    <span class="desk"></span>
  </div>
</div>

<script>
  // Column widths in pixels; the sheet runs on past the right edge of its window.
  const letters = 'ABCDEFGHIJKLMNOPQR'.split('');
  const widths = [96,134,96,149,96,96,96,96,148,96,96,96,96,96,96,96,96,96];
  const cols = document.getElementById('cols');
  [40, ...widths].forEach(w => { const c = document.createElement('col'); c.style.width = w + 'px'; cols.append(c); });

  const link = '<a href="#">PVF@18%</a>';
  // text, columns spanned
  const data = {
    A1:['Ans'], H1:['Ans<span class="picked"></span>'], A2:['PV of Cash flows',2], H2:['PV of Cash flows',2],
    A3:['Yr'], B3:['Cash flow(NZ$)'], C3:['$/NZ$'], D3:['Cash flow(US$)'], E3:[link], F3:['PV'],
    H3:['Yr'], I3:['Cash flow(NZ$)'], J3:[link], K3:['PV'],
    A4:[1], B4:[12], C4:[0.6], D4:[7.2], E4:[0.847458], F4:[6.101695], H4:[1], I4:[12], J4:[0.847458], K4:[10.16949],
    A5:[2], B5:[30], C5:[0.6], D5:[18], E5:[0.718184], F5:[12.92732], H5:[2], I5:[30], J5:[0.718184], K5:[21.54553],
    E6:['Total'], F6:[19.02901], J6:['Total'], K6:[31.71502],
    A8:['Initial Investment',2], C8:['$30'], H8:['Initial Investment',2], J8:['$30 or NZ$50',2],
    A10:['Salvage value =(Initial outlay-PV of Cash flow)(1+k)^n',5], H10:['Salvage value =(Initial outlay-PV of Cash flow)(1+k)^n',5],
    A11:['SV = (30-19.02901)(1+0.18)^2',3], H11:['SV = (50-31.71502)(1+0.18)^2',3],
    A12:['SV=10.97099*1.3924',2], H12:['SV=18.28498*1.3924',2],
    A13:['SV=15.276006476 US$',2], H13:['SV=25.4600 NZ$',2]
  };
  const heavyRight = (c, r) => r <= 13 && (c === 'F' || c === 'G' || (c === 'M' && (r < 3 || r > 6)) || (c === 'K' && r > 2 && r < 7));
  document.getElementById('head').innerHTML = '<tr><th aria-label="Select all"><svg class="corner" width="21" height="21"><path d="M21 0v21H0z" fill="#b4b4b4"/></svg></th>' +
    letters.map(l => `<th scope="col"${l === 'H' ? ' class="cur"' : ''}>${l}</th>`).join('') + '</tr>';
  let html = '';
  for (let r = 1; r <= 24; r++) {
    html += `<tr${r === 13 ? ' class="closing"' : ''}><th scope="row"${r === 1 ? ' class="cur"' : ''}>${r}</th>`;
    for (let i = 0; i < letters.length;) {
      const [text = '', span = 1] = data[letters[i] + r] || [];
      const last = letters[i + span - 1], cls = [];
      if (typeof text === 'number') cls.push('n');
      if (typeof text === 'number' || /^(\$|SV=)/.test(text)) cls.push('fig');
      if (heavyRight(last, r)) cls.push('rb');
      if (r === 13 && i < 13 && letters[i] !== 'G') cls.push('bb');
      if (letters[i] + r === 'B3') cls.push('clip');
      html += `<td${span > 1 ? ` colspan="${span}"` : ''}${cls.length ? ` class="${cls.join(' ')}"` : ''}>${text}</td>`;
      i += span;
    }
    html += '</tr>';
  }
  document.getElementById('rows').innerHTML = html;
</script>
<script src="https://cdn.jsdelivr.net/npm/bootstrap@5.3.0/dist/js/bootstrap.bundle.min.js"></script>
</body>
</html>
